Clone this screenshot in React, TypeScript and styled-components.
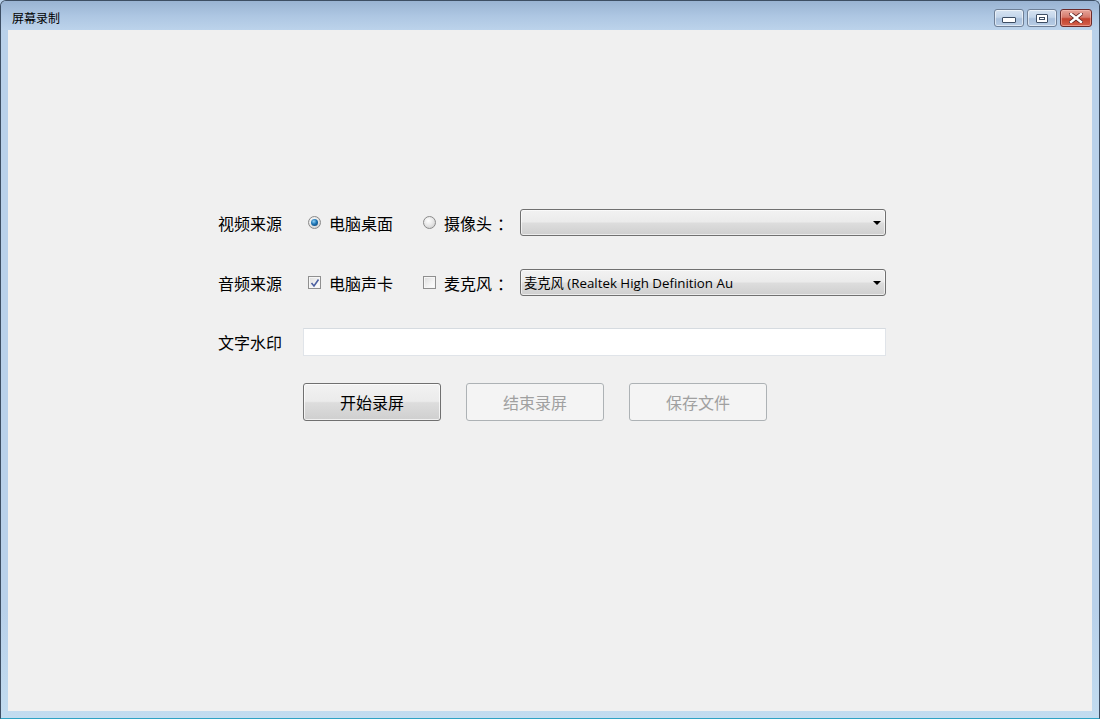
import styled, { createGlobalStyle, css } from "styled-components";

const GlobalStyle = createGlobalStyle`
  html, body {
    margin: 0;
    padding: 0;
    background: #b9d1ea;
  }
  body {
    font-family: "Noto Sans CJK SC", "Open Sans", sans-serif;
  }
`;

function App() {
  return (
    <>
      <GlobalStyle />
      <Window>
        <TitleBar>
          <Title>屏幕录制</Title>
          <Controls>
            <CtrlButton>
              <MinGlyph />
            </CtrlButton>
            <CtrlButton>
              <MaxGlyph />
            </CtrlButton>
            <CtrlButton $close>
              <svg width="14" height="10" viewBox="0 0 14 10">
                <path
                  d="M2 1 L12 9 M12 1 L2 9"
                  stroke="#5a2020"
                  strokeWidth="4"
                  strokeLinecap="square"
                />
                <path
                  d="M2 1 L12 9 M12 1 L2 9"
                  stroke="#ffffff"
                  strokeWidth="2.4"
                  strokeLinecap="square"
                />
              </svg>
            </CtrlButton>
          </Controls>
        </TitleBar>
        <Client>
          <Form>
            <Row $height={27}>
              <Label>视频来源</Label>
              <Option $width={115}>
                <Radio $checked />
                <OptionText>电脑桌面</OptionText>
              </Option>
              <Option $width={102}>
                <Radio />
                <OptionText>
                  摄像头<Colon>：</Colon>
                </OptionText>
              </Option>
              <Combo>
                <ComboText></ComboText>
                <Arrow />
              </Combo>
            </Row>
            <Row $height={27}>
              <Label>音频来源</Label>
              <Option $width={115}>
                <Check>
                  <svg width="10" height="10" viewBox="0 0 10 10">
                    <path
                      d="M1.5 5 L4 8 L8.5 1.5"
                      stroke="#4b5fa0"
                      strokeWidth="1.6"
                      fill="none"
                    />
                  </svg>
                </Check>
                <OptionText>电脑声卡</OptionText>
              </Option>
              <Option $width={102}>
                <Check />
                <OptionText>
                  麦克风<Colon>：</Colon>
                </OptionText>
              </Option>
              <Combo>
                <ComboText>麦克风 (Realtek High Definition Au</ComboText>
                <Arrow />
              </Combo>
            </Row>
            <Row $height={28}>
              <Label>文字水印</Label>
              <TextBox type="text" />
            </Row>
            <ButtonRow>
              <PushButton>开始录屏</PushButton>
              <PushButton disabled>结束录屏</PushButton>
              <PushButton disabled>保存文件</PushButton>
            </ButtonRow>
          </Form>
        </Client>
      </Window>
    </>
  );
}

export default App;

const Window = styled.div`
  box-sizing: border-box;
  width: 1100px;
  height: 719px;
  display: flex;
  flex-direction: column;
  border: 1px solid #3d4e63;
  border-bottom-color: #2fa3c4;
  border-radius: 6px 6px 0 0;
  background: linear-gradient(to bottom, #a3bcd9 0px, #b9d1ea 30px, #b9d1ea 85%, #c2dcf0 100%);
  overflow: hidden;
`;

const TitleBar = styled.div`
  height: 29px;
  flex: none;
  display: flex;
  align-items: flex-start;
  justify-content: space-between;
  padding: 0 7px 0 11px;
  background: linear-gradient(to bottom, #99b3d2 0%, #adc6e2 50%, #bcd3eb 100%);
`;

const Title = styled.div`
  font-size: 12px;
  line-height: 12px;
  margin-top: 11px;
  color: #000;
`;

const Controls = styled.div`
  display: flex;
  gap: 3px;
  margin-top: 8px;
`;

const CtrlButton = styled.div<{ $close?: boolean }>`
  box-sizing: border-box;
  width: ${(p) => (p.$close ? 32 : 30)}px;
  height: 18px;
  border: 1px solid #6e7f96;
  border-radius: 3px;
  display: flex;
  align-items: center;
  justify-content: center;
  box-shadow: inset 0 0 0 1px rgba(255, 255, 255, 0.55);
  background: linear-gradient(to bottom, #d6e3f1 0%, #c3d5ea 45%, #a9c0dc 55%, #b8cde5 100%);
  ${(p) =>
    p.$close &&
    css`
      border-color: #6b2a2a;
      box-shadow: inset 0 0 0 1px rgba(255, 200, 190, 0.5);
      background: linear-gradient(to bottom, #e5a59a 0%, #d67a6c 45%, #c3432f 55%, #d4614c 100%);
    `}
`;

const MinGlyph = styled.div`
  width: 12px;
  height: 4px;
  margin-top: 4px;
  border: 1px solid #3d4d63;
  border-radius: 1px;
  background: #ffffff;
`;

const MaxGlyph = styled.div`
  box-sizing: border-box;
  width: 12px;
  height: 9px;
  border: 1px solid #3d4d63;
  border-radius: 1px;
  background: #ffffff;
  position: relative;
  &::after {
    content: "";
    position: absolute;
    left: 2px;
    top: 2px;
    width: 6px;
    height: 3px;
    border: 1px solid #3d4d63;
    box-sizing: border-box;
  }
`;

const Client = styled.div`
  flex: 1;
  margin: 0 7px 7px 7px;
  background: #f0f0f0;
`;

const Form = styled.div`
  display: flex;
  flex-direction: column;
  gap: 33px;
  padding: 179px 0 0 210px;
`;

const Row = styled.div<{ $height: number }>`
  display: flex;
  align-items: center;
  height: ${(p) => p.$height}px;
  & + & + & {
    margin-top: -1px;
  }
`;

const Label = styled.div`
  width: 85px;
  flex: none;
  font-size: 16px;
  color: #000;
  line-height: 20px;
`;

const Option = styled.div<{ $width: number }>`
  width: ${(p) => p.$width}px;
  flex: none;
  display: flex;
  align-items: center;
  padding-left: 5px;
  box-sizing: border-box;
`;

const OptionText = styled.span`
  font-size: 16px;
  line-height: 20px;
  color: #000;
  margin-left: 8px;
  white-space: nowrap;
`;

const Colon = styled.span`
  margin-left: 5px;
`;

const Radio = styled.span<{ $checked?: boolean }>`
  box-sizing: border-box;
  width: 13px;
  height: 13px;
  border-radius: 50%;
  border: 1px solid #8a8a8a;
  background: radial-gradient(circle at 40% 35%, #ffffff 0%, #e6e6e6 50%, #c4c4c4 100%);
  display: flex;
  align-items: center;
  justify-content: center;
  &::after {
    content: "";
    width: 7px;
    height: 7px;
    border-radius: 50%;
    display: ${(p) => (p.$checked ? "block" : "none")};
    background: radial-gradient(circle at 40% 35%, #8fd0f5 0%, #1c74b4 45%, #0d3a66 100%);
  }
`;

const Check = styled.span`
  box-sizing: border-box;
  width: 13px;
  height: 13px;
  border: 1px solid #8f8f8f;
  background: linear-gradient(135deg, #dcdcdc 0%, #f4f4f4 60%, #ffffff 100%);
  box-shadow: inset 0 0 0 1px #f6f6f6;
  display: flex;
  align-items: center;
  justify-content: center;
`;

const Combo = styled.div`
  box-sizing: border-box;
  width: 366px;
  height: 27px;
  border: 1px solid #707070;
  border-radius: 3px;
  background: linear-gradient(to bottom, #f2f2f2 0%, #ebebeb 48%, #dddddd 52%, #cfcfcf 100%);
  box-shadow: inset 0 0 0 1px rgba(255, 255, 255, 0.6);
  display: flex;
  align-items: center;
  padding: 0 3px 0 3px;
`;

const ComboText = styled.span`
  flex: 1;
  font-family: "Open Sans", "Noto Sans CJK SC", sans-serif;
  font-size: 13.3px;
  color: #000;
  white-space: nowrap;
  overflow: hidden;
`;

const Arrow = styled.span`
  width: 0;
  height: 0;
  margin-right: 1px;
  border-left: 4px solid transparent;
  border-right: 4px solid transparent;
  border-top: 4px solid #000;
`;

const TextBox = styled.input`
  box-sizing: border-box;
  width: 583px;
  height: 28px;
  border: 1px solid #e0e4e9;
  border-top-color: #d6dbe0;
  background: #ffffff;
  outline: none;
  padding: 0 4px;
  font-size: 13px;
`;

const ButtonRow = styled.div`
  display: flex;
  gap: 25px;
  margin-left: 85px;
  margin-top: -6px;
`;

const PushButton = styled.button`
  box-sizing: border-box;
  width: 138px;
  height: 38px;
  border: 1px solid #707070;
  border-radius: 3px;
  font-family: "Noto Sans CJK SC", sans-serif;
  font-size: 16px;
  color: #000;
  padding: 0;
  box-shadow: inset 0 0 0 1px rgba(255, 255, 255, 0.7);
  background: linear-gradient(to bottom, #f2f2f2 0%, #ebebeb 48%, #dddddd 52%, #cfcfcf 100%);
  &:disabled {
    border-color: #adb2b5;
    color: #a0a0a0;
    background: #f4f4f4;
    box-shadow: none;
  }
`;
